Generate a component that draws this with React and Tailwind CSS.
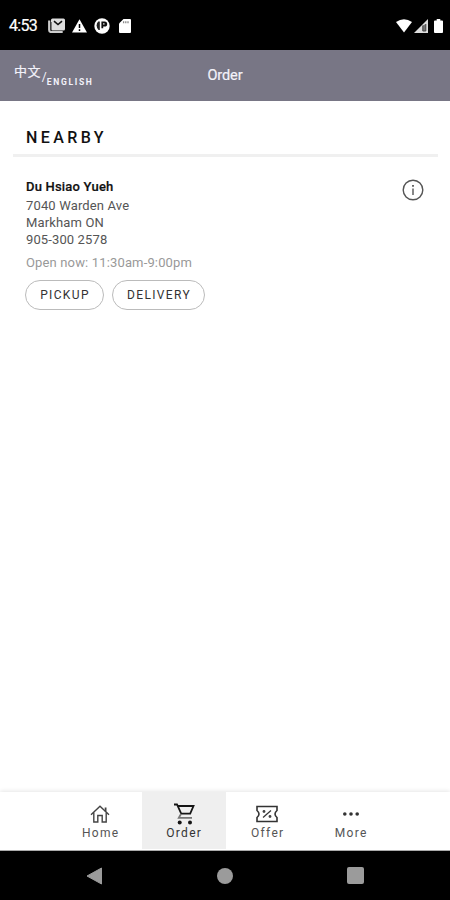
function StatusBar() {
  return (
    <div className="flex h-[50px] items-center bg-black pl-[9px] pr-[7px] pt-[1px] text-white">
      <span className="w-[39px] text-[16px] leading-none tracking-[-0.7px] [-webkit-text-stroke:0.2px]">4:53</span>
      <svg className="h-[15px] w-[17px]" viewBox="0 0 17 15" fill="none">
        <rect x="3" y="0.5" width="14" height="12" rx="1.5" fill="#ddd" />
        <path d="m6 3.2 4 3.3 4-3.3" stroke="#111" strokeWidth="1.6" />
        <path d="M1.2 2.5V12q0 2 2 2h11.5" stroke="#ccc" strokeWidth="2.2" />
        <path d="M3.3 4v8" stroke="#444" strokeWidth="0.8" />
      </svg>
      <svg className="ml-[7px] h-[14px] w-[15px]" viewBox="0 0 15 14">
        <path d="M7.5.3 15 13.5H0z" fill="#fff" />
        <path d="M7.5 5v4M7.5 10.2v1.8" stroke="#000" strokeWidth="1.5" />
      </svg>
      <svg className="ml-[7px] h-[16px] w-[16px]" viewBox="0 0 16 16">
        <circle cx="8" cy="8" r="7.7" fill="#fff" />
        <path d="M5.8 3.4v8.6H4.6q-2-2-2-4.5 0-2.5 1.6-4.1z" fill="#222" />
        <path d="M7.4 3.4v6.8h1.8V8.6h1.4a2.6 2.6 0 0 0 0-5.2z" fill="#111" />
        <path d="M9 5h1.6v1.8H9z" fill="#aaa" />
      </svg>
      <svg className="ml-[9px] h-[14px] w-[12px]" viewBox="0 0 12 14">
        <path d="M4.5 0H11q1 0 1 1v12q0 1-1 1H1q-1 0-1-1V4.5z" fill="#fff" />
        <path d="M4.6 2.2v2M6.8 2.2v2M9 2.2v2" stroke="#888" strokeWidth="1.3" />
      </svg>
      <svg className="ml-auto h-[14px] w-[16px]" viewBox="0 0 16 14">
        <path d="M0 3Q8-2.5 16 3L8 13.5z" fill="#fff" />
      </svg>
      <svg className="ml-[2px] h-[14px] w-[14px]" viewBox="0 0 14 14">
        <path d="M14 0v14H0z" fill="#ddd" />
        <path d="M8.8 6.5V12h3V5" fill="#777" stroke="#444" strokeWidth="1" />
      </svg>
      <svg className="ml-[6px] h-[14px] w-[9px]" viewBox="0 0 10 14" preserveAspectRatio="none">
        <path d="M3 0h4v1.5h2q1 0 1 1V13q0 1-1 1H1q-1 0-1-1V2.5q0-1 1-1h2z" fill="#fff" />
      </svg>
    </div>
  );
}

function Header() {
  return (
    <header className="grid h-[51px] grid-cols-3 items-center bg-[#787685] text-[#f3f2fa] shadow-[0_2px_5px_rgba(0,0,0,0.3)]">
      <div className="flex items-start pl-[14px] leading-none">
        <span className="font-['Roboto','Noto_Sans_CJK_SC',sans-serif] text-[13px] leading-[14px] tracking-[0.4px] [-webkit-text-stroke:0.2px]">中文</span>
        <span className="mt-[5px] pl-[1px] text-[12px] leading-[14px]">/</span>
        <span className="mt-[12px] text-[8.5px] font-bold leading-[10px] tracking-[1.7px]">ENGLISH</span>
      </div>
      <h1 className="pt-[1px] text-center text-[14.5px] leading-5 tracking-[-0.1px] [-webkit-text-stroke:0.2px]">Order</h1>
    </header>
  );
}

function Nearby() {
  return (
    <main className="flex-1 bg-white pl-[13px] pr-[12px] pt-[25px]">
      <h2 className="h-[31px] border-b-[3px] border-[#f0f0f0] pl-[13px] text-[16px] font-medium leading-[24px] tracking-[3.4px] text-[#111]">NEARBY</h2>
      <div className="flex justify-between pl-[13px] pr-[14px] pt-[22px]">
        <div className="text-[13px] leading-[17px] text-[#555]">
          <p className="-mt-[1px] mb-[2px] font-medium tracking-[0.2px] text-[#111] [-webkit-text-stroke:0.2px]">Du Hsiao Yueh</p>
          <p className="tracking-[0.15px]">7040 Warden Ave</p>
          <p className="tracking-[0.15px]">Markham ON</p>
          <p className="tracking-[0.12px]">905-300 2578</p>
          <p className="mt-[6px] tracking-[0.15px] text-[#999]">Open now: 11:30am-9:00pm</p>
          <div className="-ml-[1px] mt-[9px] flex gap-[8px] text-[12px] text-[#333]">
            <button className="h-[30px] w-[79px] rounded-full border border-[#bbb] pl-[1px] tracking-[1.35px]">PICKUP</button>
            <button className="h-[30px] w-[93px] rounded-full border border-[#bbb] pl-[1px] tracking-[1.35px]">DELIVERY</button>
          </div>
        </div>
        <svg className="h-[22px] w-[22px]" viewBox="0 0 22 22" fill="none" stroke="#555" strokeWidth="1.4">
          <circle cx="11" cy="11" r="9.8" />
          <path d="M11 9.5V16" />
          <path d="M11 6v1.7" strokeWidth="1.8" />
        </svg>
      </div>
    </main>
  );
}

function HomeIcon() {
  return (
    <svg className="h-[20px] w-[20px]" viewBox="0 0 20 20" fill="none" stroke="#444" strokeWidth="1.4">
      <path d="M1 10.8 10 2.2l9 8.6" />
      <path d="M3.8 8.5V18h4v-6.5h4.4V18h4V8.5" />
      <path d="M15.6 3.5v4" strokeWidth="1.8" />
    </svg>
  );
}

function CartIcon() {
  return (
    <svg className="h-[22px] w-[22px]" viewBox="0 0 22 22" fill="none" stroke="#151515" strokeWidth="1.8">
      <path d="M1 1.5h3l4.2 9.2h9L20.5 3H4.8" />
      <path d="m8 11-2.2 3.9H19" stroke="#777" />
      <circle cx="6.7" cy="19.5" r="2" fill="#151515" stroke="none" />
      <circle cx="17" cy="19.5" r="2" fill="#151515" stroke="none" />
    </svg>
  );
}

function OfferIcon() {
  return (
    <svg className="h-[18px] w-[22px]" viewBox="0 0 22 18" fill="none" stroke="#333" strokeWidth="1.6">
      <path d="M1 1.5h20v4q-4 3.5 0 7v4H1v-4q4-3.5 0-7z" />
      <path d="m7 12.5 8-7" strokeWidth="1.2" />
      <circle cx="8" cy="6.5" r="1.4" fill="#444" stroke="none" />
      <circle cx="14" cy="11.5" r="1.4" fill="#444" stroke="none" />
    </svg>
  );
}

function MoreIcon() {
  return (
    <svg className="h-[6px] w-[18px]" viewBox="0 0 18 6" fill="#333">
      <circle cx="2.8" cy="3" r="1.8" />
      <circle cx="9" cy="3" r="1.8" />
      <circle cx="15.2" cy="3" r="1.8" />
    </svg>
  );
}

const tabs = [
  { label: "Home", Icon: HomeIcon },
  { label: "Order", Icon: CartIcon, active: true },
  { label: "Offer", Icon: OfferIcon },
  { label: "More", Icon: MoreIcon },
];

function TabBar() {
  return (
    <nav className="flex h-[59px] justify-center border-b border-[#aaa] bg-white pl-[1px] shadow-[0_-1px_4px_rgba(0,0,0,0.1)]">
      {tabs.map(({ label, Icon, active }) => (
        <div key={label} className={`flex h-[57px] w-[83.5px] flex-col items-center pt-[10px] ${active ? "bg-[#efefef]" : ""}`}>
          <div className="flex h-[24px] items-center">
            <Icon />
          </div>
          <span className={`pl-[1px] text-[12px] leading-[15px] tracking-[1.3px] ${active ? "text-[#333]" : "text-[#555]"}`}>{label}</span>
        </div>
      ))}
    </nav>
  );
}

function SystemNav() {
  return (
    <div className="flex h-[49px] items-center justify-between bg-black pl-[86px] pr-[86px]">
      <svg className="h-[18px] w-[17px]" viewBox="0 0 17 18">
        <path d="M1 9 15.5 1v16z" fill="#9b9b9b" stroke="#9b9b9b" strokeLinejoin="round" />
      </svg>
      <div className="h-4 w-4 rounded-full bg-[#9b9b9b]" />
      <div className="h-[17px] w-[17px] rounded-[2px] bg-[#9b9b9b]" />
    </div>
  );
}

export default function App() {
  return (
    <div className="flex h-[900px] w-[450px] flex-col overflow-hidden bg-white font-['Roboto',sans-serif]">
      <StatusBar />
      <Header />
      <Nearby />
      <TabBar />
      <SystemNav />
    </div>
  );
}
